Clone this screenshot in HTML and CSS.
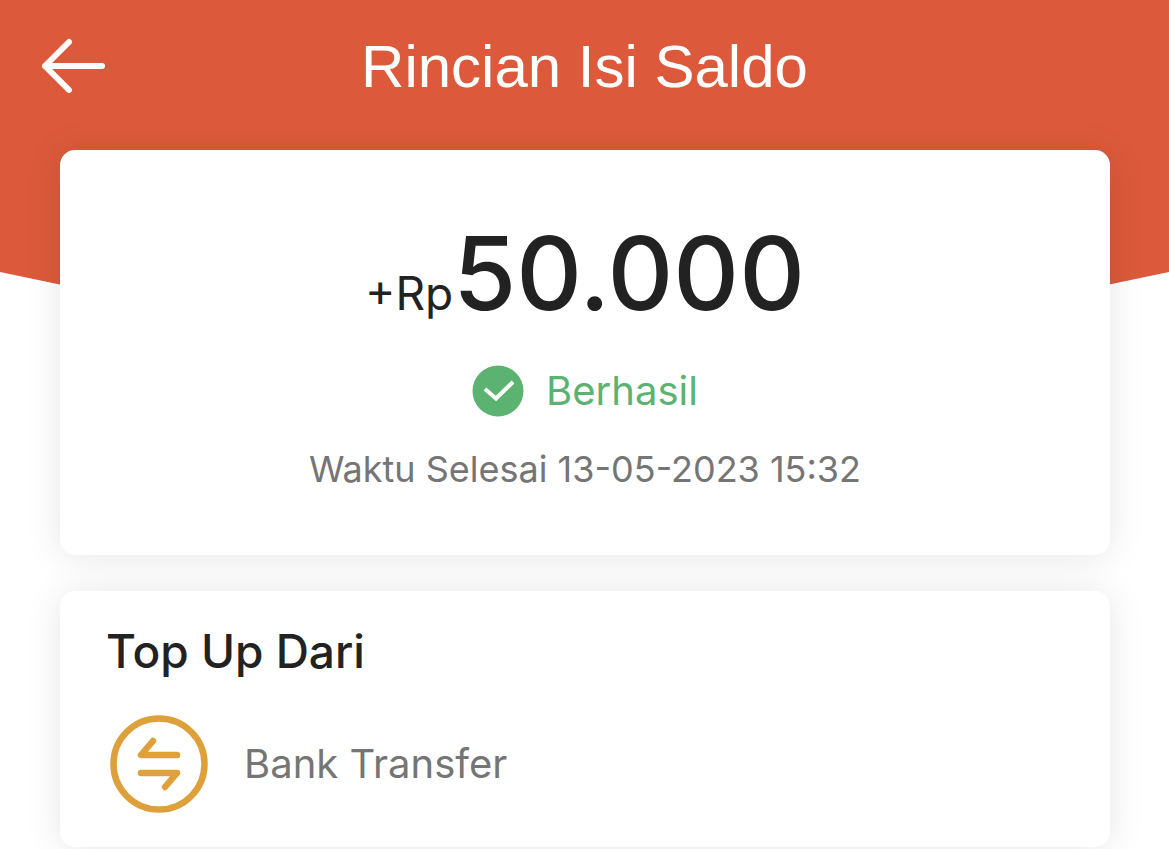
FILE: index.html
```html
<!DOCTYPE html>
<html lang="id">
<head>
<meta charset="utf-8">
<meta name="viewport" content="width=device-width, initial-scale=1">
<title>Rincian Isi Saldo</title>
<link rel="stylesheet" href="styles.css">
</head>
<body>
<div class="page">
  <div class="backdrop"></div>
  <header class="topbar">
    <button class="back" type="button" aria-label="Kembali">
      <svg viewBox="0 0 66 58" width="66" height="58" fill="none" stroke="currentColor" stroke-width="6" stroke-linecap="round" stroke-linejoin="round" aria-hidden="true">
        <path d="M29 5 5 29l24 24M5 29h57"/>
      </svg>
    </button>
    <h1 class="title">Rincian Isi Saldo</h1>
  </header>
  <main class="content">
    <section class="card summary">
      <p class="amount"><span class="currency">+Rp</span><span class="value">50.000</span></p>
      <p class="status">
        <svg class="status-icon" viewBox="0 0 52 52" width="52" height="52" aria-hidden="true">
          <circle cx="26" cy="26" r="25.5" fill="currentColor"/>
          <path d="M13 24 24 33.500 41 17" fill="none" stroke="#fff" stroke-width="4"/>
        </svg>
        <span>Berhasil</span>
      </p>
      <p class="time">Waktu Selesai 13-05-2023 15:32</p>
    </section>
    <section class="card source">
      <h2 class="source-title">Top Up Dari</h2>
      <div class="method">
        <svg class="method-icon" viewBox="0 0 98 98" width="98" height="98" fill="none" stroke="currentColor" stroke-width="6.500" stroke-linecap="round" stroke-linejoin="round" aria-hidden="true">
          <circle cx="49" cy="49" r="45.500"/>
          <path d="M43 26 31 40h36M31 58h36L55 72"/>
        </svg>
        <span>Bank Transfer</span>
      </div>
    </section>
  </main>
</div>
</body>
</html>
```
FILE: styles.css
```css
* {
  box-sizing: border-box;
}

body {
  margin: 0;
  background: #fff;
  color: #222;
  font-family: Inter, "Liberation Sans", sans-serif;
}

h1, h2, p {
  margin: 0;
}

.page {
  position: relative;
}

.backdrop {
  position: absolute;
  inset: 0 0 auto;
  height: 394px;
  background: #dc5a3b;
  clip-path: polygon(0 0, 100% 0, 100% 272px, 50% 100%, 0 272px);
}

.topbar {
  position: relative;
  display: grid;
  grid-template-columns: 66px 1fr 66px;
  align-items: center;
  height: 132px;
  padding: 0 40px;
  color: #fff;
}

.back {
  display: flex;
  padding: 0;
  border: 0;
  background: none;
  color: inherit;
  cursor: pointer;
}

.title {
  padding-top: 2px;
  font-family: "Liberation Sans", Arial, sans-serif;
  font-size: 60px;
  font-weight: 400;
  line-height: 72px;
  text-align: center;
}

.content {
  position: relative;
  display: grid;
  gap: 36px;
  padding: 18px 59px 2px 60px;
}

.card {
  border-radius: 15px;
  background: #fff;
  box-shadow: 0 2px 36px rgba(0, 0, 0, 0.1);
}

.summary {
  display: flex;
  flex-direction: column;
  align-items: center;
  padding: 60px 24px 64px;
}

.amount {
  display: flex;
  align-items: baseline;
  line-height: 126px;
}

.currency {
  font-size: 46px;
}

.value {
  font-size: 102px;
  font-weight: 500;
}

.status {
  display: flex;
  align-items: center;
  gap: 22px;
  margin-top: 9px;
  color: #5cb270;
  font-size: 40px;
  line-height: 52px;
}

.time {
  margin-top: 30px;
  color: #757575;
  font-size: 36px;
  line-height: 44px;
}

.source {
  padding: 32px 46px 34px;
}

.source-title {
  font-size: 46px;
  font-weight: 500;
  line-height: 56px;
}

.method {
  display: flex;
  align-items: center;
  gap: 36px;
  margin-top: 36px;
  padding-left: 4px;
  color: #757575;
  font-size: 40px;
  line-height: 50px;
}

.method-icon {
  color: #dda03a;
}
```
